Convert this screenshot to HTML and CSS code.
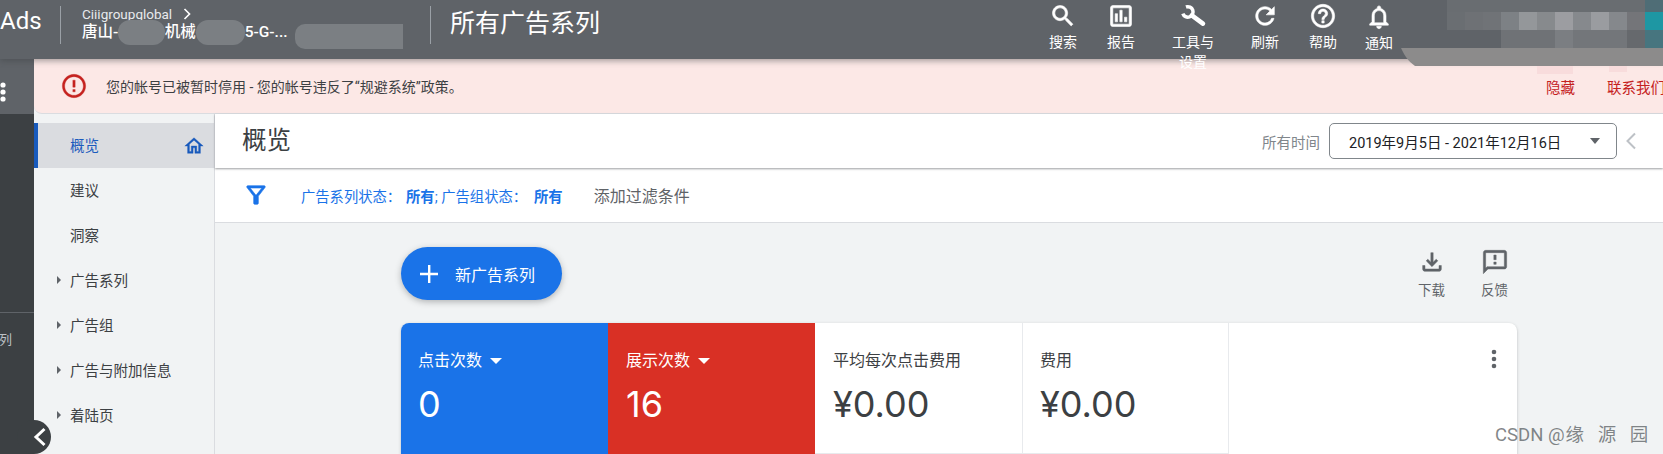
FILE: index.html
```html
<!DOCTYPE html>
<html lang="zh-CN">
<head>
  <meta charset="UTF-8">
  <title>所有广告系列</title>
  <link rel="stylesheet" href="styles.css">
</head>
<body>
  <header class="topbar">
    <div class="logo">Ads</div>
    <div class="crumbs">
      <div class="crumb-top">Ciiigroupglobal
        <svg class="crumb-arrow" viewBox="0 0 12 14"><path d="M3 1l6 6-6 6" /></svg>
      </div>
      <div class="crumb-name">唐山-　　　机械-3　　 5-G-...</div>
    </div>
    <h1 class="page-title">所有广告系列</h1>
    <nav class="actions">
      <div class="action">
        <svg viewBox="0 0 24 24"><path d="M15.5 14h-.79l-.28-.27C15.41 12.59 16 11.11 16 9.5 16 5.91 13.09 3 9.5 3S3 5.91 3 9.5 5.91 16 9.5 16c1.61 0 3.09-.59 4.23-1.57l.27.28v.79l5 4.99L20.49 19l-4.99-5zm-6 0C7.01 14 5 11.99 5 9.5S7.01 5 9.5 5 14 7.01 14 9.5 11.99 14 9.5 14z"/></svg>
        <span>搜索</span>
      </div>
      <div class="action">
        <svg viewBox="0 0 24 24"><path d="M19 3H5c-1.1 0-2 .9-2 2v14c0 1.1.9 2 2 2h14c1.1 0 2-.9 2-2V5c0-1.1-.9-2-2-2zm0 16H5V5h14v14zM7 10h2v7H7zm4-3h2v10h-2zm4 6h2v4h-2z"/></svg>
        <span>报告</span>
      </div>
      <div class="action action-wide">
        <svg class="wrench" viewBox="0 0 24 24"><path d="M6 4.3A4.5 4.5 0 1 1 3.3 10"/><path class="wrench-handle" d="M11 11.5l9.5 7"/></svg>
        <span>工具与<br>设置</span>
      </div>
      <div class="action">
        <svg viewBox="0 0 24 24"><path d="M17.65 6.35C16.2 4.9 14.21 4 12 4c-4.42 0-7.99 3.58-7.99 8s3.57 8 7.99 8c3.73 0 6.84-2.55 7.73-6h-2.08c-.82 2.33-3.04 4-5.65 4-3.31 0-6-2.69-6-6s2.69-6 6-6c1.66 0 3.14.69 4.22 1.78L13 11h7V4l-2.35 2.35z"/></svg>
        <span>刷新</span>
      </div>
      <div class="action">
        <svg viewBox="0 0 24 24"><path d="M11 18h2v-2h-2v2zm1-16C6.48 2 2 6.48 2 12s4.48 10 10 10 10-4.48 10-10S17.52 2 12 2zm0 18c-4.41 0-8-3.59-8-8s3.59-8 8-8 8 3.59 8 8-3.59 8-8 8zm0-14c-2.21 0-4 1.79-4 4h2c0-1.1.9-2 2-2s2 .9 2 2c0 2-3 1.75-3 5h2c0-2.25 3-2.5 3-5 0-2.21-1.79-4-4-4z"/></svg>
        <span>帮助</span>
      </div>
      <div class="action action-last">
        <svg viewBox="0 0 24 24"><path d="M12 22c1.1 0 2-.9 2-2h-4c0 1.1.89 2 2 2zm6-6v-5c0-3.07-1.64-5.64-4.5-6.32V4c0-.83-.67-1.5-1.5-1.5s-1.5.67-1.5 1.5v.68C7.63 5.36 6 7.92 6 11v5l-2 2v1h16v-1l-2-2zm-2 1H8v-6c0-2.48 1.51-4.5 4-4.5s4 2.02 4 4.5v6z"/></svg>
        <span>通知</span>
      </div>
    </nav>
  </header>

  <!-- redacted patches that sit on top of the header -->
  <div class="blob blob-one"></div>
  <div class="blob blob-two"></div>
  <div class="blob blob-three"></div>
  <svg class="mosaic" viewBox="0 0 263 76">
    <rect x="47" y="0" width="216" height="12" fill="#696d71"/>
    <rect x="47" y="12" width="18" height="18" fill="#6a6e72"/>
    <rect x="65" y="12" width="18" height="18" fill="#6e7175"/>
    <rect x="83" y="12" width="18" height="18" fill="#707377"/>
    <rect x="101" y="12" width="18" height="18" fill="#7d8185"/>
    <rect x="119" y="12" width="18" height="18" fill="#94979a"/>
    <rect x="137" y="12" width="18" height="18" fill="#878a8d"/>
    <rect x="155" y="12" width="18" height="18" fill="#9c9da1"/>
    <rect x="173" y="12" width="18" height="18" fill="#86898d"/>
    <rect x="191" y="12" width="18" height="18" fill="#9a9ca0"/>
    <rect x="209" y="12" width="18" height="18" fill="#85888c"/>
    <rect x="227" y="12" width="18" height="18" fill="#747579"/>
    <rect x="245" y="12" width="18" height="18" fill="#1e97a3"/>
    <rect x="101" y="30" width="54" height="18" fill="#6f7276"/>
    <rect x="155" y="30" width="18" height="18" fill="#7b7e82"/>
    <rect x="173" y="30" width="54" height="18" fill="#73767a"/>
    <rect x="227" y="30" width="18" height="18" fill="#66696d"/>
    <rect x="245" y="0" width="18" height="12" fill="#4f6d76"/>
    <rect x="245" y="30" width="18" height="18" fill="#47757f"/>
    <path d="M1 48H263V66H15C9 62 4 55 1 48z" fill="#8c8b8b"/>
    <rect x="137" y="66" width="36" height="8" fill="#f8dcdc"/>
    <rect x="209" y="66" width="18" height="6" fill="#f8dcdc"/>
  </svg>

  <div class="page">
    <aside class="rail">
      <div class="rail-top">
        <svg viewBox="0 0 8 22"><circle cx="3" cy="4" r="2.6"/><circle cx="3" cy="11" r="2.6"/><circle cx="3" cy="18" r="2.6"/></svg>
      </div>
      <div class="rail-item">列</div>
    </aside>

    <div class="main">
      <div class="banner">
        <svg class="banner-icon" viewBox="0 0 24 24"><path d="M11 15h2v2h-2zm0-8h2v6h-2zm.99-5C6.47 2 2 6.48 2 12s4.47 10 9.99 10C17.52 22 22 17.52 22 12S17.52 2 11.99 2zM12 20c-4.42 0-8-3.58-8-8s3.58-8 8-8 8 3.58 8 8-3.58 8-8 8z"/></svg>
        <span class="banner-text">您的帐号已被暂时停用 - 您的帐号违反了“规避系统”政策。</span>
        <a class="banner-link">隐藏</a>
        <a class="banner-link banner-contact">联系我们</a>
      </div>

      <div class="below">
        <nav class="sidenav">
          <div class="nav-item active">概览
            <svg class="nav-home" viewBox="0 0 24 24"><path d="M12 5.69l5 4.5V18h-2v-6H9v6H7v-7.81l5-4.5M12 3L2 12h3v8h6v-6h2v6h6v-8h3L12 3z"/></svg>
          </div>
          <div class="nav-item">建议</div>
          <div class="nav-item">洞察</div>
          <div class="nav-item has-sub">广告系列</div>
          <div class="nav-item has-sub">广告组</div>
          <div class="nav-item has-sub">广告与附加信息</div>
          <div class="nav-item has-sub">着陆页</div>
        </nav>

        <main class="content">
          <div class="title-bar">
            <h2>概览</h2>
            <span class="date-label">所有时间</span>
            <div class="date-box">
              <span>2019年9月5日 - 2021年12月16日</span>
              <i class="caret"></i>
            </div>
            <svg class="date-back" viewBox="0 0 12 18"><path d="M10 1.5L2.5 9l7.5 7.5"/></svg>
          </div>

          <div class="filter-bar">
            <svg class="filter-icon" viewBox="0 0 24 24"><path d="M7 6h10l-5.01 6.3L7 6zm-2.75-.39C6.27 8.2 10 13 10 13v6c0 .55.45 1 1 1h2c.55 0 1-.45 1-1v-6s3.73-4.8 5.75-7.39C20.26 4.95 19.79 4 18.95 4H5.04c-.83 0-1.3.95-.79 1.61z"/></svg>
            <span class="filter-text">广告系列状态：<b>所有</b>; 广告组状态：<b>所有</b></span>
            <span class="filter-add">添加过滤条件</span>
          </div>

          <div class="overview">
            <div class="toolbar">
              <button class="new-btn">
                <svg viewBox="0 0 20 20"><path d="M9 1h2.4v7.8H19v2.4h-7.6V19H9v-7.8H1V8.8h8z"/></svg>
                新广告系列
              </button>
              <div class="tools">
                <div class="tool">
                  <svg viewBox="0 0 24 24"><path d="M18 15v3H6v-3H4v3c0 1.1.9 2 2 2h12c1.1 0 2-.9 2-2v-3h-2zm-1-4l-1.41-1.41L13 12.17V4h-2v8.17L8.41 9.59 7 11l5 5 5-5z"/></svg>
                  <span>下载</span>
                </div>
                <div class="tool">
                  <svg viewBox="0 0 24 24"><path d="M20 2H4c-1.1 0-1.99.9-1.99 2L2 22l4-4h14c1.1 0 2-.9 2-2V4c0-1.1-.9-2-2-2zm0 14H5.17L4 17.17V4h16v12zm-9-4h2v2h-2zm0-6h2v4h-2z"/></svg>
                  <span>反馈</span>
                </div>
              </div>
            </div>

            <section class="card">
              <div class="tile tile-blue">
                <div class="tile-label">点击次数 <i class="caret"></i></div>
                <div class="tile-value">0</div>
              </div>
              <div class="tile tile-red">
                <div class="tile-label">展示次数 <i class="caret"></i></div>
                <div class="tile-value">16</div>
              </div>
              <div class="tile">
                <div class="tile-label">平均每次点击费用</div>
                <div class="tile-value">¥0.00</div>
              </div>
              <div class="tile tile-last">
                <div class="tile-label">费用</div>
                <div class="tile-value">¥0.00</div>
              </div>
              <svg class="card-menu" viewBox="0 0 24 24"><circle cx="12" cy="5" r="2.3"/><circle cx="12" cy="12" r="2.3"/><circle cx="12" cy="19" r="2.3"/></svg>
            </section>
          </div>
        </main>
      </div>
    </div>
  </div>

  <div class="collapse">
    <svg viewBox="0 0 14 20"><path d="M11.5 2L3 10l8.5 8"/></svg>
  </div>
  <div class="watermark">CSDN @<span class="watermark-name">缘 源 园</span></div>
</body>
</html>
```
FILE: styles.css
```css
* {
  box-sizing: border-box;
}

body {
  margin: 0;
  width: 1663px;
  height: 454px;
  overflow: hidden;
  position: relative;
  font-family: Roboto, "Noto Sans CJK SC", sans-serif;
  background-color: #f1f3f4;
  color: #3c4043;
}

/* header */
.topbar {
  position: relative;
  z-index: 2;
  display: flex;
  height: 59px;
  background-color: #5f6368;
  color: #fff;
  box-shadow: 0 2px 6px rgba(60, 64, 67, 0.45);
}

.logo {
  width: 61px;
  height: 38px;
  margin-top: 6px;
  font-size: 24px;
  line-height: 30px;
  border-right: 1px solid #9aa0a6;
}

.crumbs {
  width: 370px;
  height: 38px;
  margin-top: 6px;
  padding-left: 21px;
  border-right: 1px solid #9aa0a6;
}

.crumb-top {
  font-size: 13.5px;
  line-height: 16px;
  color: #e8eaed;
}

.crumb-arrow {
  width: 10px;
  height: 12px;
  margin-left: 6px;
  vertical-align: -1px;
  fill: none;
  stroke: #fff;
  stroke-width: 2;
}

.crumb-name {
  font-size: 15.5px;
  line-height: 20px;
  font-weight: 500;
  white-space: nowrap;
}

.page-title {
  margin: 0 0 0 19px;
  font-size: 25px;
  font-weight: 400;
  line-height: 47px;
}

.actions {
  display: flex;
  margin-left: auto;
  margin-right: 257px;
}

.action {
  width: 58px;
  padding-top: 2px;
  text-align: center;
  font-size: 14px;
  line-height: 20px;
}

.action-wide {
  width: 86px;
}

.action-last {
  width: 54px;
  padding-top: 3px;
}

.action svg {
  display: block;
  width: 28px;
  height: 28px;
  margin: 0 auto 2px;
  fill: #fff;
  stroke: #fff;
  stroke-width: 0.5;
}

.action .wrench {
  fill: none;
  stroke-width: 3;
}

.action .wrench-handle {
  stroke-width: 4;
  stroke-linecap: round;
}

/* the header patches */
.blob {
  position: absolute;
  z-index: 3;
  background-color: #7b7f83;
}

.blob-one {
  left: 118px;
  top: 20px;
  width: 47px;
  height: 25px;
  border-radius: 12px;
}

.blob-two {
  left: 196px;
  top: 20px;
  width: 49px;
  height: 25px;
  border-radius: 12px;
}

.blob-three {
  left: 295px;
  top: 24px;
  width: 108px;
  height: 25px;
  border-radius: 10px 0 0 10px;
}

.mosaic {
  position: absolute;
  z-index: 3;
  left: 1400px;
  top: 0;
  width: 263px;
  height: 76px;
}

/* left rail */
.page {
  display: flex;
  height: 395px;
}

.rail {
  width: 34px;
  flex-shrink: 0;
  background-color: #3c4043;
}

.rail-top {
  height: 55px;
  padding-top: 22px;
  background-color: #5f6368;
}

.rail-top svg {
  display: block;
  width: 8px;
  height: 22px;
  fill: #fff;
}

.rail-item {
  margin-top: 198px;
  height: 60px;
  padding-top: 18px;
  border-top: 1px solid #5f6368;
  font-size: 13px;
  line-height: 18px;
  color: #bdc1c6;
  text-indent: -1px;
}

.main {
  flex: 1;
  display: flex;
  flex-direction: column;
  min-width: 0;
}

/* account banner */
.banner {
  display: flex;
  align-items: center;
  height: 55px;
  padding-left: 26px;
  flex-shrink: 0;
  background-color: #fce8e6;
  border-bottom: 1px solid #dadce0;
  border-bottom-left-radius: 8px;
  font-size: 14px;
}

.banner-icon {
  width: 28px;
  height: 28px;
  fill: #c5221f;
  stroke: #c5221f;
  stroke-width: 0.3;
}

.banner-text {
  margin-left: 18px;
}

.banner-link {
  margin-left: auto;
  flex-shrink: 0;
  color: #c5221f;
  font-size: 14.5px;
  white-space: nowrap;
}

.banner-contact {
  margin-left: 32px;
  margin-right: -2px;
}

.below {
  flex: 1;
  display: flex;
  min-height: 0;
}

/* side navigation */
.sidenav {
  width: 181px;
  flex-shrink: 0;
  padding-top: 9px;
  border-right: 1px solid #dadce0;
}

.nav-item {
  position: relative;
  display: flex;
  align-items: center;
  height: 45px;
  padding-left: 36px;
  padding-bottom: 2px;
  font-size: 14.5px;
}

.nav-item.active {
  padding-right: 9px;
  justify-content: space-between;
  background-color: #dadce0;
  border-left: 4px solid #185abc;
  padding-left: 32px;
  color: #1a5bbd;
}

.nav-home {
  width: 22px;
  height: 22px;
  fill: #185abc;
  stroke: #185abc;
  stroke-width: 0.4;
  margin-top: 2px;
}

.has-sub::before {
  content: "";
  position: absolute;
  left: 23px;
  top: 18px;
  border-left: 4px solid #5f6368;
  border-top: 4px solid transparent;
  border-bottom: 4px solid transparent;
}

.content {
  flex: 1;
  min-width: 0;
}

/* page title row */
.title-bar {
  position: relative;
  display: flex;
  align-items: center;
  height: 54px;
  padding-left: 27px;
  background-color: #fff;
  box-shadow: 0 1px 2px rgba(60, 64, 67, 0.5);
}

.title-bar h2 {
  margin: 0 auto 0 0;
  padding-bottom: 5px;
  font-size: 24.5px;
  font-weight: 400;
  color: #3c4043;
}

.date-label {
  font-size: 14.5px;
  color: #80868b;
}

.date-box {
  display: flex;
  align-items: center;
  justify-content: space-between;
  width: 288px;
  height: 36px;
  margin-left: 9px;
  padding: 0 19px;
  border: 1px solid #80868b;
  border-radius: 5px;
  font-size: 14.5px;
  color: #202124;
  white-space: nowrap;
}

.date-box .caret {
  margin-right: -3px;
  border-left-width: 5.5px;
  border-right-width: 5.5px;
  border-top-color: #5f6368;
}

.caret {
  display: inline-block;
  border-left: 6px solid transparent;
  border-right: 6px solid transparent;
  border-top: 6px solid #fff;
}

.date-back {
  width: 12px;
  height: 18px;
  margin: 0 26px 0 8px;
  fill: none;
  stroke: #bdc1c6;
  stroke-width: 2;
}

/* filter row */
.filter-bar {
  display: flex;
  align-items: center;
  height: 55px;
  padding-left: 27px;
  background-color: #fff;
  border-bottom: 1px solid #dadce0;
}

.filter-icon {
  width: 28px;
  height: 28px;
  fill: #1a73e8;
  stroke: #1a73e8;
  stroke-width: 0.5;
}

.filter-text {
  margin-left: 31px;
  font-size: 14.3px;
  color: #1a73e8;
}

.filter-text b {
  font-weight: 700;
  margin-left: 5px;
}

.filter-text b:last-child {
  margin-left: 7px;
}

.filter-add {
  margin-left: 31px;
  font-size: 16px;
  color: #5f6368;
}

/* overview */
.overview {
  padding-left: 186px;
}

.toolbar {
  display: flex;
  justify-content: space-between;
  width: 1125px;
  height: 100px;
  padding-top: 24px;
}

.new-btn {
  display: flex;
  align-items: center;
  width: 161px;
  height: 53px;
  padding: 0 0 0 18px;
  border: none;
  border-radius: 27px;
  background-color: #1a73e8;
  box-shadow: 0 2px 6px rgba(60, 64, 67, 0.35);
  font-family: inherit;
  font-size: 16px;
  color: #fff;
}

.new-btn svg {
  width: 20px;
  height: 20px;
  margin-right: 16px;
  fill: #fff;
}

.tools {
  display: flex;
  margin-top: 1px;
}

.tool {
  width: 63px;
  text-align: center;
  font-size: 13.5px;
  color: #5f6368;
}

.tool svg {
  display: block;
  width: 28px;
  height: 28px;
  margin: 0 auto 3px;
  fill: #5f6368;
  stroke: #5f6368;
  stroke-width: 0.4;
}

.card {
  position: relative;
  display: flex;
  width: 1116px;
  height: 132px;
  background-color: #fff;
  border-radius: 8px 8px 0 0;
  box-shadow: 0 1px 3px rgba(60, 64, 67, 0.3);
  overflow: hidden;
}

.tile {
  width: 207px;
  height: 131px;
  padding: 28px 0 0 18px;
  color: #3c4043;
  border-bottom: 1px solid #e8eaed;
}

.tile-blue {
  padding-left: 17px;
  background-color: #1a73e8;
  color: #fff;
  border-bottom: none;
}

.tile-red {
  background-color: #d93025;
  color: #fff;
  border-bottom: none;
}

.tile-last {
  padding-left: 17px;
  border-left: 1px solid #e8eaed;
  border-right: 1px solid #e8eaed;
}

.tile-label {
  font-size: 16px;
  line-height: 20px;
}

.tile-label .caret {
  margin-left: 4px;
  vertical-align: 2px;
}

.tile-value {
  margin-top: 9px;
  font-family: Inter, Roboto, sans-serif;
  font-size: 36px;
  line-height: 48px;
}

.card-menu {
  position: absolute;
  right: 11px;
  top: 24px;
  width: 24px;
  height: 24px;
  fill: #5f6368;
}

/* overlays */
.collapse {
  position: absolute;
  left: 17px;
  top: 420px;
  display: flex;
  align-items: center;
  justify-content: flex-end;
  width: 34px;
  height: 34px;
  padding-right: 4px;
  border-radius: 50%;
  background-color: #3c4043;
}

.collapse svg {
  width: 14px;
  height: 20px;
  fill: none;
  stroke: #fff;
  stroke-width: 3;
}

.watermark {
  position: absolute;
  left: 1495px;
  top: 423px;
  font-size: 18.5px;
  line-height: 24px;
  color: rgba(90, 94, 98, 0.75);
  white-space: nowrap;
}

.watermark-name {
  margin-left: 1px;
  word-spacing: 9px;
}
```
